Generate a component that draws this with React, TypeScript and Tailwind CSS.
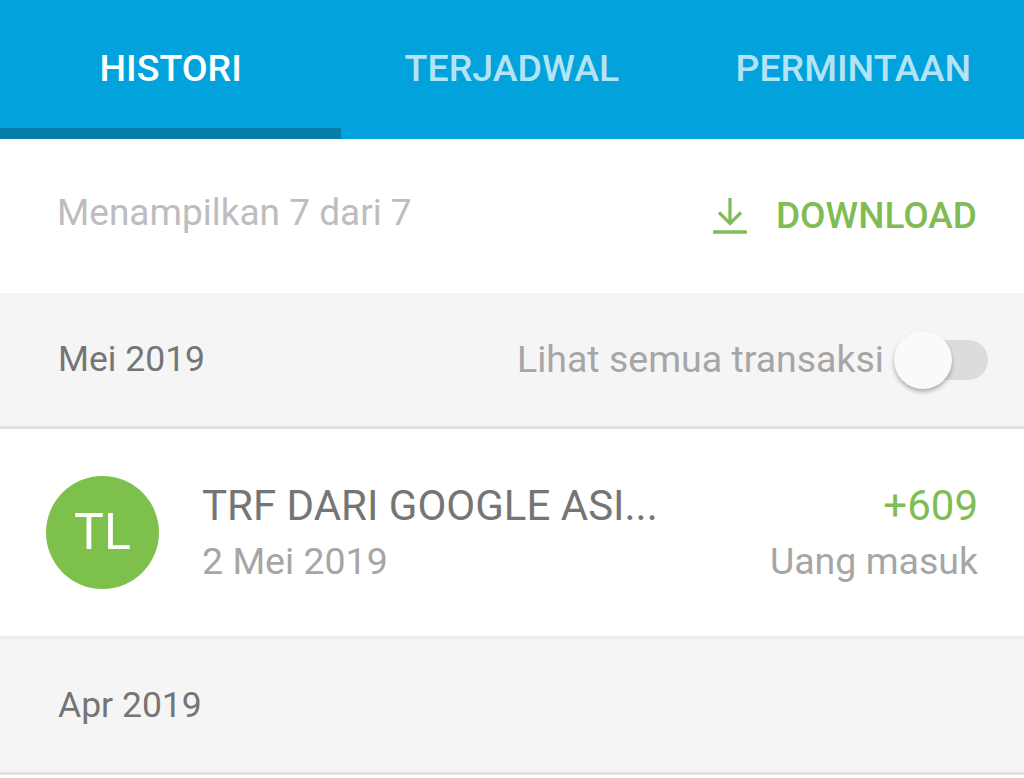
import { useState } from 'react';

const font = "font-['Roboto',sans-serif]";

function DownloadIcon() {
  return (
    <svg width="34" height="38" viewBox="0 0 34 38" fill="none" className="text-[#7fbc55]">
      <path d="M17 1v25M6 15.500l11 11 11-11" stroke="currentColor" strokeWidth="3.200" />
      <path d="M1.500 35h31" stroke="currentColor" strokeWidth="3.600" strokeLinecap="round" />
    </svg>
  );
}

function Tab({ label, active }: { label: string; active?: boolean }) {
  return (
    <div className={`flex-1 flex items-center justify-center pb-[3px] text-[37.500px] font-medium ${active ? 'text-white border-b-[11px] border-[#067da6] pt-[11px]' : 'text-[#b3e3f5] border-b-[11px] border-transparent pt-[11px]'}`}>
      {label}
    </div>
  );
}

function MonthHeader({ children, label }: { children?: React.ReactNode; label: string }) {
  return (
    <div className="h-[136px] bg-[#f5f5f5] border-b-[3px] border-[#e2e2e2] flex items-center justify-between pl-[58px] pr-[36px]">
      <span className="text-[35.500px] text-[#757575]">{label}</span>
      {children}
    </div>
  );
}

export default function App() {
  const [showAll] = useState(false);

  return (
    <div className={`${font} w-[1024px] h-[778px] overflow-hidden bg-white`}>
      {/* tab bar */}
      <div className="h-[139px] bg-[#02a3dc] flex">
        <Tab label="HISTORI" active />
        <Tab label="TERJADWAL" />
        <Tab label="PERMINTAAN" />
      </div>

      {/* summary */}
      <div className="h-[154px] flex items-center justify-between pl-[57px] pr-[47px]">
        <span className="text-[37px] text-[#bdbdbd] pb-[6px]">Menampilkan 7 dari 7</span>
        <div className="flex items-center gap-[29px] text-[#7fbc55]">
          <DownloadIcon />
          <span className="text-[37px] font-medium">DOWNLOAD</span>
        </div>
      </div>

      <MonthHeader label="Mei 2019">
        <div className="flex items-center gap-[10px]">
          <span className="text-[37.500px] text-[#a6a6a6]">Lihat semua transaksi</span>
          <div className="relative w-[94px] h-[40px] rounded-full bg-[#dcdcdc]">
            {!showAll && (
              <div className="absolute left-0 top-[-9px] w-[58px] h-[58px] rounded-full bg-[#fafafa] shadow-[0_3px_4px_rgba(0,0,0,0.28)]" />
            )}
          </div>
        </div>
      </MonthHeader>

      {/* transaction */}
      <div className="h-[210px] flex items-center border-b-[3px] border-[#ececec] pl-[46px] pr-[46px]">
        <div className="w-[113px] h-[113px] rounded-full bg-[#7dc04b] flex items-center justify-center text-white text-[50px] shrink-0">
          TL
        </div>
        <div className="ml-[43px] flex-1 min-w-0">
          <div className="text-[42px] leading-[56px] text-[#757575]">TRF DARI GOOGLE ASI...</div>
          <div className="text-[37.500px] leading-[54px] text-[#a6a6a6]">2 Mei 2019</div>
        </div>
        <div className="text-right">
          <div className="text-[42px] leading-[56px] text-[#7fbc55]">+609</div>
          <div className="text-[37.500px] leading-[54px] text-[#a6a6a6]">Uang masuk</div>
        </div>
      </div>

      <MonthHeader label="Apr 2019" />
    </div>
  );
}
